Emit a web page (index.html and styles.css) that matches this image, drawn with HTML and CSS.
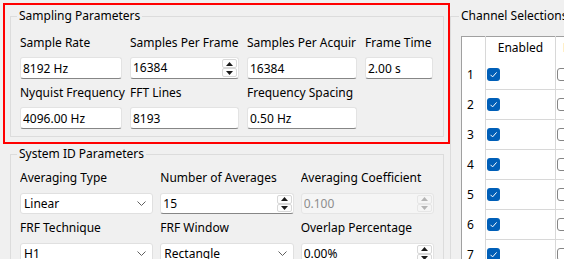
FILE: index.html
```html
<!DOCTYPE html>
<html lang="en">
<head>
  <meta charset="UTF-8">
  <title>Acquisition Setup</title>
  <link rel="stylesheet" href="styles.css">
</head>
<body>
  <div class="window">
    <div class="left-pane">
      <div class="marked">
        <fieldset class="group sampling">
          <legend>Sampling Parameters</legend>
          <div class="fields four">
            <div class="field">
              <label>Sample Rate</label>
              <input class="edit" value="8192 Hz" readonly>
            </div>
            <div class="field">
              <label>Samples Per Frame</label>
              <div class="spin">
                <input class="spin-text" value="16384" readonly>
                <span class="steps">
                  <span class="step"><svg width="7" height="4" viewBox="0 0 7 4"><polygon points="0,4 3.5,0 7,4"/></svg></span>
                  <span class="step"><svg width="7" height="4" viewBox="0 0 7 4"><polygon points="0,0 7,0 3.5,4"/></svg></span>
                </span>
              </div>
            </div>
            <div class="field">
              <label>Samples Per Acquir</label>
              <input class="edit" value="16384" readonly>
            </div>
            <div class="field">
              <label>Frame Time</label>
              <input class="edit" value="2.00 s" readonly>
            </div>
            <div class="field">
              <label>Nyquist Frequency</label>
              <input class="edit" value="4096.00 Hz" readonly>
            </div>
            <div class="field">
              <label>FFT Lines</label>
              <input class="edit" value="8193" readonly>
            </div>
            <div class="field">
              <label>Frequency Spacing</label>
              <input class="edit" value="0.50 Hz" readonly>
            </div>
          </div>
        </fieldset>
      </div>

      <fieldset class="group sysid">
        <legend>System ID Parameters</legend>
        <div class="fields three">
          <div class="field">
            <label>Averaging Type</label>
            <div class="combo"><span>Linear</span><svg class="chevron" width="9" height="5" viewBox="0 0 9 5"><path d="M0.5 0.5 L4.5 4.5 L8.5 0.5"/></svg></div>
          </div>
          <div class="field">
            <label>Number of Averages</label>
            <div class="spin">
              <input class="spin-text" value="15" readonly>
              <span class="steps">
                <span class="step"><svg width="7" height="4" viewBox="0 0 7 4"><polygon points="0,4 3.5,0 7,4"/></svg></span>
                <span class="step"><svg width="7" height="4" viewBox="0 0 7 4"><polygon points="0,0 7,0 3.5,4"/></svg></span>
              </span>
            </div>
          </div>
          <div class="field">
            <label>Averaging Coefficient</label>
            <div class="spin disabled">
              <input class="spin-text" value="0.100" disabled>
              <span class="steps">
                <span class="step"><svg width="7" height="4" viewBox="0 0 7 4"><polygon points="0,4 3.5,0 7,4"/></svg></span>
                <span class="step"><svg width="7" height="4" viewBox="0 0 7 4"><polygon points="0,0 7,0 3.5,4"/></svg></span>
              </span>
            </div>
          </div>
          <div class="field">
            <label>FRF Technique</label>
            <div class="combo"><span>H1</span><svg class="chevron" width="9" height="5" viewBox="0 0 9 5"><path d="M0.5 0.5 L4.5 4.5 L8.5 0.5"/></svg></div>
          </div>
          <div class="field">
            <label>FRF Window</label>
            <div class="combo"><span>Rectangle</span><svg class="chevron" width="9" height="5" viewBox="0 0 9 5"><path d="M0.5 0.5 L4.5 4.5 L8.5 0.5"/></svg></div>
          </div>
          <div class="field">
            <label>Overlap Percentage</label>
            <div class="spin white">
              <input class="spin-text" value="0.00%" readonly>
              <span class="steps">
                <span class="step"><svg width="7" height="4" viewBox="0 0 7 4"><polygon points="0,4 3.5,0 7,4"/></svg></span>
                <span class="step"><svg width="7" height="4" viewBox="0 0 7 4"><polygon points="0,0 7,0 3.5,4"/></svg></span>
              </span>
            </div>
          </div>
        </div>
      </fieldset>
    </div>

    <fieldset class="group channels">
      <legend>Channel Selections</legend>
      <table class="channel-table">
        <colgroup>
          <col class="c-num">
          <col class="c-flag">
          <col class="c-rest">
        </colgroup>
        <thead>
          <tr><th class="corner"></th><th>Enabled</th><th class="left">Reference</th></tr>
        </thead>
        <tbody id="channelRows"></tbody>
      </table>
    </fieldset>
  </div>

  <script>
    const rows = document.getElementById('channelRows');
    const tick = '<svg width="13" height="13" viewBox="0 0 13 13"><path d="M3.5 6.8 L5.6 8.9 L9.6 4.4" fill="none" stroke="#fff" stroke-width="1"/></svg>';
    for (let i = 1; i <= 8; i++) {
      const tr = document.createElement('tr');
      tr.innerHTML = `<td class="num">${i}</td>` +
        `<td><span class="check on">${tick}</span></td>` +
        `<td><span class="check"></span></td>`;
      rows.appendChild(tr);
    }
  </script>
</body>
</html>
```

FILE: styles.css
```css
/* Base */
* {
  box-sizing: border-box;
}

body {
  margin: 0;
  width: 564px;
  height: 259px;
  overflow: hidden;
  background: #f0f0f0;
  color: #000;
  font-family: "Noto Sans", "Segoe UI", sans-serif;
  font-size: 12px;
  line-height: 16px;
}

.window {
  display: flex;
  gap: 6px;
  padding: 8px 0 0 10px;
}

.left-pane {
  flex: none;
  width: 434px;
}

/* Group boxes */
.group {
  margin: 0;
  min-width: 0;
  border: 1px solid #dcdcdc;
  padding: 11px 9px 7px;
}

.group legend {
  padding: 0 2px;
  margin-left: -3px;
}

.sysid {
  margin-top: 9px;
  padding-top: 8px;
}

.channels {
  flex: none;
  width: 220px;
  padding: 12px 0 0 10px;
}

.channels legend {
  margin-left: -2px;
}

/* red highlight drawn over the first group */
.marked {
  position: relative;
}

.marked::after {
  content: "";
  position: absolute;
  left: -7px;
  top: -5px;
  right: -6px;
  bottom: -7px;
  border: 2px solid #ff0000;
  pointer-events: none;
}

/* Field grids */
.fields {
  display: grid;
  column-gap: 8px;
  row-gap: 6px;
}

.fields.four {
  grid-template-columns: 102px 109px 110px 68px;
}

.fields.three {
  grid-template-columns: repeat(3, minmax(0, 1fr));
  column-gap: 7px;
}

.field {
  min-width: 0;
}

.field label {
  display: block;
  white-space: nowrap;
  overflow: hidden;
  margin: 0 -7px 6px 0;
}

.sysid .field label {
  margin-bottom: 7px;
}

/* Line edits */
.edit {
  display: block;
  width: 100%;
  height: 22px;
  margin: 0;
  padding: 0 2px;
  font: inherit;
  color: inherit;
  background: #fff;
  border: 1px solid #e3e3e3;
  border-bottom-color: #868686;
  border-radius: 3px;
  outline: none;
}

/* Spin boxes */
.spin {
  display: flex;
  height: 22px;
  padding: 1px;
  background: #fff;
  border: 1px solid #e3e3e3;
  border-bottom-color: #868686;
  border-radius: 3px;
}

.sysid .spin {
  height: 21px;
}

.spin.white {
  border-bottom-color: #e3e3e3;
}

.spin-text {
  flex: 1;
  min-width: 0;
  margin: 0;
  padding: 0 1px;
  border: none;
  background: transparent;
  font: inherit;
  color: inherit;
  outline: none;
}

.steps {
  display: flex;
  flex-direction: column;
  width: 15px;
}

.step {
  flex: 1;
  display: flex;
  align-items: center;
  justify-content: center;
  background: #fdfdfd;
  border: 1px solid #d8d8d8;
  border-radius: 2px;
}

.step svg {
  fill: #1a1a1a;
}

.spin.disabled {
  background: #f5f5f5;
  border-color: #e5e5e5;
}

.spin.disabled .spin-text {
  color: #8d8d8d;
}

.spin.disabled .step {
  background: transparent;
  border-color: #e6e6e6;
}

.spin.disabled .step svg {
  fill: #b4b4b4;
}

/* Combo boxes */
.combo {
  display: flex;
  align-items: center;
  justify-content: space-between;
  height: 21px;
  padding: 0 6px 0 3px;
  background: #fff;
  border: 1px solid #e0e0e0;
  border-radius: 3px;
}

.chevron {
  fill: none;
  stroke: #5f5f5f;
  stroke-width: 1;
}

/* Channel table */
.channel-table {
  table-layout: fixed;
  width: 220px;
  border-collapse: collapse;
  background: #fff;
  border: 1px solid #a0a0a0;
}

.c-num {
  width: 24px;
}

.c-flag {
  width: 70px;
}

.c-rest {
  width: 126px;
}

.channel-table th {
  height: 23px;
  padding: 0;
  font-weight: normal;
  text-align: center;
  white-space: nowrap;
  overflow: hidden;
  border-left: 1px solid #d8d8d8;
}

.channel-table th.left {
  text-align: left;
  padding-left: 7px;
}

.channel-table th.corner {
  border-left: none;
}

.channel-table td {
  height: 30px;
  padding: 0 0 0 1px;
  border-left: 1px solid #d8d8d8;
  border-bottom: 1px solid #d8d8d8;
}

.channel-table td.num {
  padding-left: 5px;
  border-left: none;
  border-bottom: none;
}

.check {
  display: block;
  width: 13px;
  height: 13px;
  border: 1px solid #858585;
  border-radius: 3px;
  background: #fff;
}

.check.on {
  border: none;
  background: #005fb8;
}

.check svg {
  display: block;
}
```
